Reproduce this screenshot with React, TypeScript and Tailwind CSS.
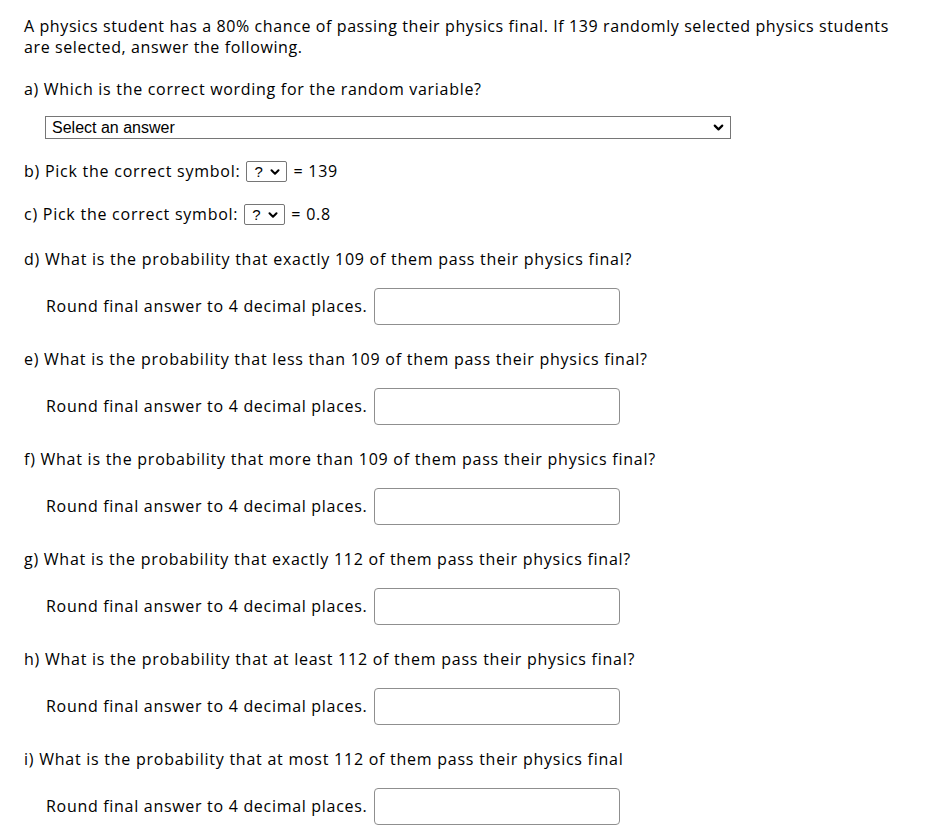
import { ChevronDown } from "lucide-react";

const questions = [
  "d) What is the probability that exactly 109 of them pass their physics final?",
  "e) What is the probability that less than 109 of them pass their physics final?",
  "f) What is the probability that more than 109 of them pass their physics final?",
  "g) What is the probability that exactly 112 of them pass their physics final?",
  "h) What is the probability that at least 112 of them pass their physics final?",
  "i) What is the probability that at most 112 of them pass their physics final",
];

function SymbolSelect() {
  return (
    <div className="mx-[6px] flex h-[21px] w-[41px] items-center justify-between rounded-[2px] border border-[#767676] bg-white pl-[7px] pr-[4px] font-['Liberation_Sans',Arial,sans-serif] text-[15px] tracking-normal text-black">
      <span>?</span>
      <ChevronDown size={14} strokeWidth={3.5} />
    </div>
  );
}

function RoundRow() {
  return (
    <div className="mt-[18px] flex items-center pl-[22px] tracking-[0.7px]">
      <span>Round final answer to 4 decimal places.</span>
      <div className="ml-[7px] h-[37px] w-[246px] rounded-[4px] border border-[#8f8f8f] bg-white" />
    </div>
  );
}

export default function App() {
  return (
    <div className="min-h-screen bg-white pl-6 pr-2 pt-[16px] font-['Open_Sans',sans-serif] text-[16px] leading-[21px] tracking-[0.6px] text-black [font-variant-ligatures:none]">
      <p>
        A physics student has a 80% chance of passing their physics final. If 139 randomly selected physics students
        <br />
        are selected, answer the following.
      </p>

      <p className="mt-[21px] tracking-[0.7px]">a) Which is the correct wording for the random variable?</p>

      <div className="ml-[21px] mt-[16px] flex h-[23px] w-[686px] items-center justify-between border border-[#767676] bg-white pl-[6px] pr-[4px] font-['Liberation_Sans',Arial,sans-serif] text-[16px] tracking-normal">
        <span>Select an answer</span>
        <ChevronDown size={15} strokeWidth={3.5} />
      </div>

      <div className="mt-[22px] flex h-[21px] items-center tracking-[0.75px]">
        <span>b) Pick the correct symbol:</span>
        <SymbolSelect />
        <span>= 139</span>
      </div>

      <div className="mt-[22px] flex h-[21px] items-center tracking-[0.75px]">
        <span>c) Pick the correct symbol:</span>
        <SymbolSelect />
        <span>= 0.8</span>
      </div>

      {questions.map((q) => (
        <div key={q} className="mt-[24px]">
          <p className="tracking-[0.75px]">{q}</p>
          <RoundRow />
        </div>
      ))}
    </div>
  );
}
